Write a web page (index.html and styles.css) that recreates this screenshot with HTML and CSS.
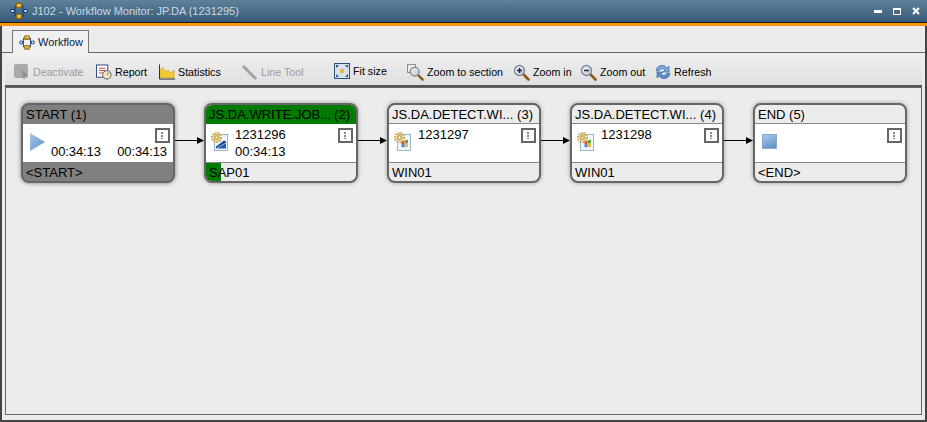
FILE: index.html
```html
<!DOCTYPE html>
<html lang="en">
<head>
    <meta charset="UTF-8">
    <title>J102 - Workflow Monitor: JP.DA (1231295)</title>
    <link rel="stylesheet" href="styles.css">
</head>
<body>
    <svg class="defs" width="0" height="0">
        <defs>
            <linearGradient id="g-lens" x1="0" y1="0" x2="1" y2="1">
                <stop offset="0" stop-color="#f4f7fa"/>
                <stop offset="1" stop-color="#b9c6d4"/>
            </linearGradient>
            <linearGradient id="g-gold" x1="0" y1="0" x2="0" y2="1">
                <stop offset="0" stop-color="#ffd84a"/>
                <stop offset="1" stop-color="#d89a18"/>
            </linearGradient>
            <linearGradient id="g-play" x1="0" y1="0" x2="1" y2="1">
                <stop offset="0" stop-color="#a9c6e8"/>
                <stop offset="1" stop-color="#5f8fc8"/>
            </linearGradient>
            <symbol id="i-flow" viewBox="0 0 18 16">
                <path d="M1 6.500h3v3H1zM14 6.500h3v3h-3z" fill="#fff" stroke="#123a78"/>
                <path d="M7 3H5v10h2M11 3h2v10h-2" fill="none" stroke="#123a78"/>
                <rect x="6.500" y="0.500" width="5" height="4" fill="url(#g-gold)" stroke="#8a6410"/>
                <rect x="6.500" y="11.500" width="5" height="4" fill="url(#g-gold)" stroke="#8a6410"/>
            </symbol>
            <symbol id="i-gear" viewBox="0 0 12 12">
                <circle cx="6" cy="6" r="5" fill="none" stroke="#c8a850" stroke-width="2" stroke-dasharray="2 1"/>
                <circle cx="6" cy="6" r="3.600" fill="#e6c661"/>
                <circle cx="6" cy="6" r="1.700" fill="#fff" stroke="#8a6a20" stroke-width="0.700"/>
            </symbol>
            <symbol id="i-win" viewBox="0 0 18 19">
                <rect x="3.500" y="2.500" width="13" height="16" fill="#f2f6fb" stroke="#9db4d0"/>
                <path d="M7.500 9l3-.6v3.400l-3 .4z" fill="#d9482b"/>
                <path d="M11 8.300l3-.6v3.500l-3 .5z" fill="#5aa83a"/>
                <path d="M7.500 12.500l3-.4v3.300l-3-.6z" fill="#3f78d0"/>
                <path d="M11 12l3-.4v3.700l-3-.4z" fill="#edc02e"/>
                <use href="#i-gear" x="0" y="0" width="11" height="11"/>
            </symbol>
            <symbol id="i-sap" viewBox="0 0 18 19">
                <rect x="3.500" y="2.500" width="13" height="16" fill="#f2f6fb" stroke="#9db4d0"/>
                <path d="M5 16.500l10-6v-1l-2-1-8 6z" fill="#174f96"/>
                <path d="M5 17l10-6v5.500H5z" fill="#1d5fae"/>
                <use href="#i-gear" x="0" y="0" width="11" height="11"/>
            </symbol>
            <symbol id="i-lens" viewBox="0 0 17 17">
                <path d="M9.500 9.500l6 6" stroke="#8a5a14" stroke-width="2.600" stroke-linecap="round"/>
                <circle cx="6.500" cy="6.500" r="5" fill="url(#g-lens)" stroke="#7d8a96" stroke-width="1.400"/>
            </symbol>
        </defs>
    </svg>

    <div class="window">
        <div class="titlebar">
            <svg class="title-icon" width="18" height="16"><use href="#i-flow"/></svg>
            <span class="title-text">J102 - Workflow Monitor: JP.DA (1231295)</span>
            <div class="window-buttons">
                <svg width="8" height="3" viewBox="0 0 8 3"><rect width="8" height="3" fill="#fff"/></svg>
                <svg width="8" height="7" viewBox="0 0 8 7"><path d="M.5 1.500h7v5h-7z" fill="none" stroke="#fff"/><rect width="8" height="2" fill="#fff"/></svg>
                <svg width="8" height="8" viewBox="0 0 8 8"><path d="M1 1l6 6M7 1L1 7" stroke="#fff" stroke-width="2"/></svg>
            </div>
        </div>

        <div class="tab-strip">
            <div class="tab">
                <svg width="16" height="15"><use href="#i-flow"/></svg>
                <span>Workflow</span>
            </div>
        </div>

        <div class="toolbar">
            <div class="tool disabled w-deactivate">
                <svg width="16" height="16" viewBox="0 0 16 16"><rect x="0" y="0" width="14" height="14" rx="2" fill="#a9a9a9"/><path d="M7 5l7 7-3 1-1 3z" fill="#8e8e8e"/></svg>
                <span>Deactivate</span>
            </div>
            <div class="tool w-report">
                <svg width="16" height="16" viewBox="0 0 17 16"><rect x=".5" y=".5" width="12" height="13" fill="#fff" stroke="#27407a"/><path d="M3 4h7M3 6.500h7M3 9h4" stroke="#c0392b"/><circle cx="11.500" cy="11" r="4.500" fill="#f0e6c0" stroke="#555"/><path d="M11.500 11l2-2" stroke="#333"/></svg>
                <span>Report</span>
            </div>
            <div class="tool w-statistics">
                <svg width="16" height="16" viewBox="0 0 17 16"><path d="M1 14V6l3-3 3 5 3-2 3 3 3-3v8z" fill="#f2cc35" stroke="#c09a20" stroke-width=".6"/><path d="M.5 0v15.500H17" fill="none" stroke="#222"/></svg>
                <span>Statistics</span>
            </div>
            <div class="tool disabled w-line">
                <svg width="17" height="17" viewBox="0 0 17 17"><path d="M2 2l13 13" stroke="#a3a3a3" stroke-width="3"/></svg>
                <span>Line Tool</span>
            </div>
            <div class="tool fit w-fit">
                <svg width="16" height="16" viewBox="0 0 16 16"><rect x=".5" y=".5" width="15" height="15" fill="#d6e2ee" stroke="#2f4f78"/><rect x="6" y="6" width="4" height="4" fill="#efb53a"/><path d="M2 2h3L2 5zM14 2v3l-3-3zM2 14v-3l3 3zM14 14h-3l3-3z" fill="#2f4f78"/></svg>
                <span>Fit size</span>
            </div>
            <div class="tool w-section">
                <svg width="17" height="17" viewBox="0 0 17 17"><rect x=".5" y=".5" width="8" height="8" fill="none" stroke="#333" stroke-dasharray="1 1"/><use href="#i-lens" x="2" y="2" width="15" height="15"/></svg>
                <span>Zoom to section</span>
            </div>
            <div class="tool w-zoomin">
                <svg width="17" height="17" viewBox="0 0 17 17"><use href="#i-lens"/><path d="M4 6.500h5M6.500 4v5" stroke="#1c2c44" stroke-width="1.500"/></svg>
                <span>Zoom in</span>
            </div>
            <div class="tool w-zoomout">
                <svg width="17" height="17" viewBox="0 0 17 17"><use href="#i-lens"/><path d="M4 6.500h5" stroke="#1c2c44" stroke-width="1.500"/></svg>
                <span>Zoom out</span>
            </div>
            <div class="tool">
                <svg width="16" height="16" viewBox="0 0 16 16"><path d="M1 7a6 6 0 0 1 11-3l2-2v6H8l2-2a3.500 3.500 0 0 0-6 1z" fill="#7fa6d6" stroke="#3f6ea8" stroke-width=".7"/><path d="M15 9a6 6 0 0 1-11 3l-2 2V8h6l-2 2a3.500 3.500 0 0 0 6-1z" fill="#5c8cc6" stroke="#3f6ea8" stroke-width=".7"/></svg>
                <span>Refresh</span>
            </div>
        </div>

        <div class="canvas">
            <div class="node node-start">
                <div class="node-head"><span class="node-name">START (1)</span></div>
                <div class="node-body">
                    <svg class="play" width="15" height="18" viewBox="0 0 15 18"><path d="M0 0l15 9L0 18z" fill="url(#g-play)"/></svg>
                    <div class="times"><span>00:34:13</span><span>00:34:13</span></div>
                    <div class="node-menu"></div>
                </div>
                <div class="node-foot">&lt;START&gt;</div>
            </div>
            <svg class="link" width="29" height="9" viewBox="0 0 29 9"><path d="M0 4.500h23" stroke="#000"/><path d="M22 1l7 3.500L22 8z" fill="#000"/></svg>

            <div class="node node-running">
                <div class="node-head"><span class="node-name">JS.DA.WRITE.JOB...</span> <span>(2)</span></div>
                <div class="node-body">
                    <svg class="job-icon" width="18" height="19"><use href="#i-sap"/></svg>
                    <div class="job-text">1231296<br>00:34:13</div>
                    <div class="node-menu"></div>
                </div>
                <div class="node-foot"><span class="progress"></span><span class="foot-label">SAP01</span></div>
            </div>
            <svg class="link" width="29" height="9" viewBox="0 0 29 9"><path d="M0 4.500h23" stroke="#000"/><path d="M22 1l7 3.500L22 8z" fill="#000"/></svg>

            <div class="node">
                <div class="node-head"><span class="node-name">JS.DA.DETECT.WI...</span> <span>(3)</span></div>
                <div class="node-body">
                    <svg class="job-icon" width="18" height="19"><use href="#i-win"/></svg>
                    <div class="job-text">1231297</div>
                    <div class="node-menu"></div>
                </div>
                <div class="node-foot">WIN01</div>
            </div>
            <svg class="link" width="29" height="9" viewBox="0 0 29 9"><path d="M0 4.500h23" stroke="#000"/><path d="M22 1l7 3.500L22 8z" fill="#000"/></svg>

            <div class="node">
                <div class="node-head"><span class="node-name">JS.DA.DETECT.WI...</span> <span>(4)</span></div>
                <div class="node-body">
                    <svg class="job-icon" width="18" height="19"><use href="#i-win"/></svg>
                    <div class="job-text">1231298</div>
                    <div class="node-menu"></div>
                </div>
                <div class="node-foot">WIN01</div>
            </div>
            <svg class="link" width="29" height="9" viewBox="0 0 29 9"><path d="M0 4.500h23" stroke="#000"/><path d="M22 1l7 3.500L22 8z" fill="#000"/></svg>

            <div class="node">
                <div class="node-head"><span class="node-name">END (5)</span></div>
                <div class="node-body">
                    <div class="end-mark"></div>
                    <div class="node-menu"></div>
                </div>
                <div class="node-foot">&lt;END&gt;</div>
            </div>
        </div>
    </div>
</body>
</html>
```

FILE: styles.css
```css
* {
    margin: 0;
    padding: 0;
    box-sizing: border-box;
}

html, body {
    width: 927px;
    height: 422px;
    overflow: hidden;
}

body {
    font-family: "Liberation Sans", Arial, sans-serif;
    background: #ececec;
    color: #000;
}

.defs {
    position: absolute;
}

.window {
    width: 927px;
    height: 422px;
    display: flex;
    flex-direction: column;
    background: #ececec;
    border-left: 2px solid #444;
    border-right: 2px solid #444;
    border-bottom: 2px solid #444;
}

/* title bar */
.titlebar {
    height: 26px;
    margin: 0 -2px 0 -2px;
    padding: 0 0 4px 10px;
    flex: none;
    display: flex;
    align-items: center;
    background: linear-gradient(#5f8199 0%, #4a6d87 45%, #38597a 85%, #1c1c1c 85%, #1c1c1c 88%, #ff9400 88%);
}

.title-icon {
    flex: none;
}

.title-text {
    margin-left: 4px;
    font-size: 11px;
    color: #c9d9e5;
}

.window-buttons {
    margin-left: auto;
    margin-right: 7px;
    display: flex;
    align-items: center;
    gap: 11px;
}

.window-buttons svg {
    display: block;
}

/* tabs */
.tab-strip {
    height: 27px;
    flex: none;
    padding: 4px 0 0 10px;
    border-bottom: 1px solid #666;
}

.tab {
    width: 77px;
    height: 23px;
    display: flex;
    align-items: center;
    gap: 3px;
    padding-left: 6px;
    font-size: 11px;
    color: #0a1a44;
    background: #f1f1f1;
    border: 1px solid #777;
    border-bottom: none;
}

/* toolbar */
.toolbar {
    height: 34px;
    flex: none;
    margin: 0 3px;
    padding: 6px 0 0 9px;
    display: flex;
    align-items: center;
    font-size: 10.7px;
    background: linear-gradient(#f0f0f0, #dfdfdf);
    border-bottom: 2px solid #555;
}

.tool {
    display: flex;
    align-items: center;
    gap: 3px;
    white-space: nowrap;
}

.tool.disabled {
    color: #9b9b9b;
}

.tool.fit {
    margin-top: -2px;
}

/* each slot is as wide as the button plus the space after it */
.w-deactivate { width: 82px; }
.w-report { width: 63px; }
.w-statistics { width: 82px; }
.w-line { width: 93px; }
.w-fit { width: 73px; }
.w-section { width: 106px; }
.w-zoomin { width: 67px; }
.w-zoomout { width: 75px; }

/* workflow canvas */
.canvas {
    flex: 1;
    margin: 0 3px 5px 3px;
    padding: 15px;
    display: flex;
    align-items: flex-start;
    background: #ececec;
    border: 1px solid #666;
    font-size: 13px;
}

.node {
    width: 154px;
    height: 80px;
    flex: none;
    display: flex;
    flex-direction: column;
    background: #ececec;
    border: 2px solid #666;
    border-radius: 8px;
    overflow: hidden;
    box-shadow: 0 0 4px rgba(0, 0, 0, 0.35);
}

.node-head {
    height: 19px;
    flex: none;
    padding: 1px 6px 0 3px;
    display: flex;
    justify-content: space-between;
    align-items: center;
    border-bottom: 1px solid #888;
}

.node-body {
    height: 38px;
    flex: none;
    position: relative;
    display: flex;
    align-items: flex-start;
    background: #fff;
}

.node-foot {
    flex: 1;
    padding-left: 3px;
    display: flex;
    align-items: center;
    position: relative;
    border-top: 1px solid #888;
}

.node-start {
    background: #808080;
    box-shadow: 0 0 4px rgba(0, 0, 0, 0.5);
}

.node-start .node-head,
.node-start .node-foot {
    border-color: #808080;
}

.node-running .node-head {
    background: #007a00;
    border-color: #007a00;
}

.progress {
    position: absolute;
    left: 0;
    top: 0;
    bottom: 0;
    width: 15px;
    background: #007a00;
}

.foot-label {
    position: relative;
}

.node-menu {
    position: absolute;
    top: 4px;
    right: 3px;
    width: 15px;
    height: 15px;
    background: #fff;
    border: 2px solid #666;
}

.node-menu::after {
    content: "";
    position: absolute;
    left: 4px;
    top: 2px;
    width: 2px;
    height: 7px;
    background: repeating-linear-gradient(#888 0, #888 2px, transparent 2px, transparent 3px);
}

.job-icon {
    flex: none;
    margin: 8px 0 0 5px;
}

.job-text {
    margin: 2px 0 0 6px;
    line-height: 17px;
}

.play {
    flex: none;
    margin: 9px 0 0 7px;
}

.times {
    flex: 1;
    margin: 19px 6px 0 6px;
    line-height: 17px;
    letter-spacing: -0.1px;
    display: flex;
    justify-content: space-between;
}

.end-mark {
    width: 15px;
    height: 15px;
    margin: 10px 0 0 7px;
    background: linear-gradient(160deg, #a8c6e8, #5f8fc8);
    border: 1px solid #8aa8cc;
}

.link {
    flex: none;
    margin-top: 33px;
}
```
